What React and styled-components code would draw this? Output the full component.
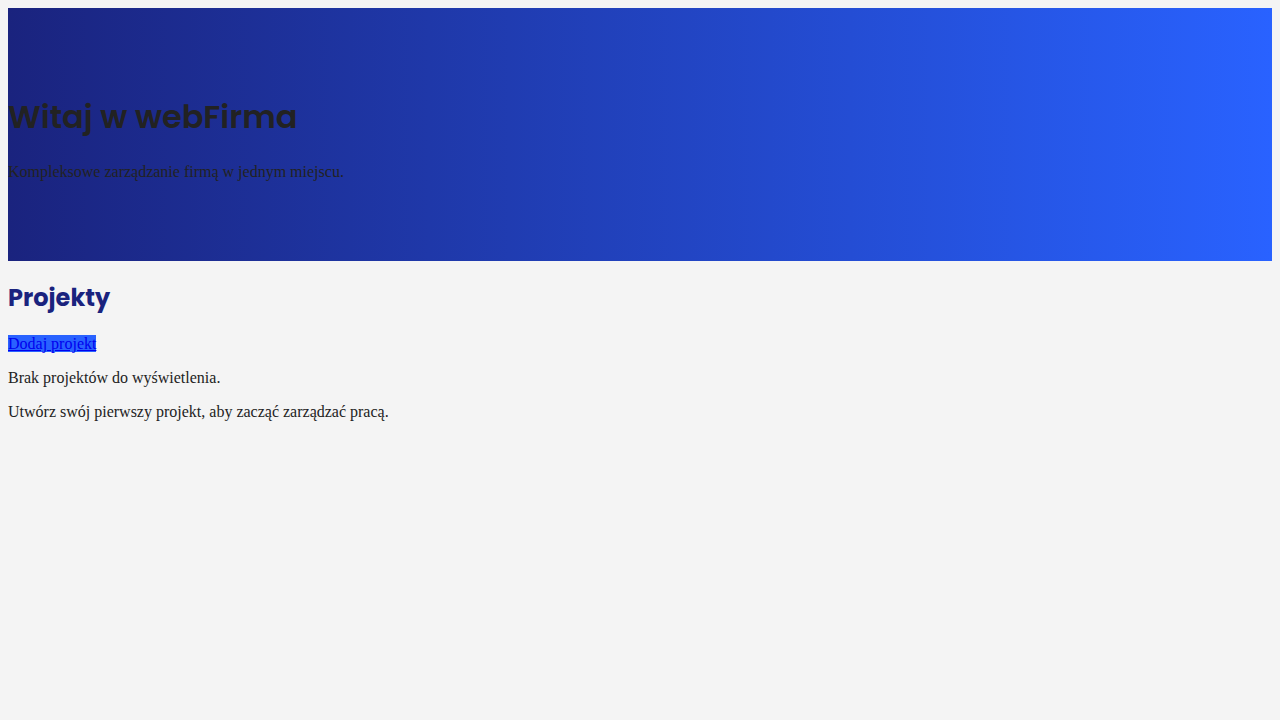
import React from 'react';
import styled, { createGlobalStyle } from 'styled-components';

const GlobalStyle = createGlobalStyle`
  body {
    margin: 8px;
    background-color: #f4f4f4;
    color: #222;
    font-family: 'Liberation Serif', 'Times New Roman', serif;
    font-size: 16px;
  }
`;

const Hero = styled.section`
  padding: 64px 0;
  background: linear-gradient(90deg, #1a237e 0%, #2962ff 100%);
  color: #222;

  h1 {
    margin: 21.44px 0;
    font-family: 'Poppins', 'Inter', 'Liberation Sans', sans-serif;
    font-weight: 600;
    font-size: 32px;
    line-height: 48px;
  }

  p {
    margin: 16px 0;
  }
`;

const Section = styled.section`
  h2 {
    margin: 19px 0 19px;
    font-family: 'Poppins', 'Inter', 'Liberation Sans', sans-serif;
    font-weight: 700;
    font-size: 24px;
    line-height: 36px;
    color: #1a237e;
  }

  p {
    margin: 16px 0;
  }
`;

const ActionLink = styled.a`
  background-color: #2962ff;
  color: #0000ee;
  text-decoration: underline;
`;

const App = () => {
  return (
    <>
      <GlobalStyle />
      <Hero>
        <h1>Witaj w webFirma</h1>
        <p>Kompleksowe zarządzanie firmą w jednym miejscu.</p>
      </Hero>
      <Section>
        <h2>Projekty</h2>
        <ActionLink href="#">Dodaj projekt</ActionLink>
        <p>Brak projektów do wyświetlenia.</p>
        <p>Utwórz swój pierwszy projekt, aby zacząć zarządzać pracą.</p>
      </Section>
    </>
  );
};

export default App;
